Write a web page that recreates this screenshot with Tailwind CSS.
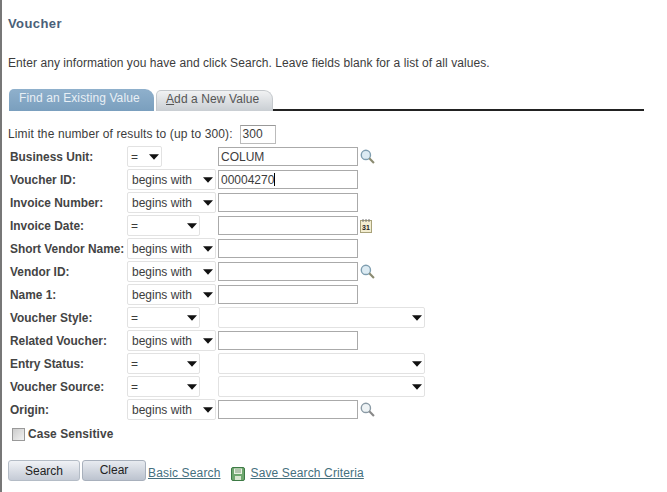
<!DOCTYPE html>
<html><head><meta charset="utf-8"><script src="https://cdn.jsdelivr.net/npm/@tailwindcss/browser@4"></script></head>
<body class="bg-white">
<div class="w-[667px] h-[492px] overflow-hidden bg-white font-['Liberation_Sans',Arial,sans-serif] text-[12px] text-[#3c3c3c] border-l-2 border-[#777] pl-[6px] flex flex-col items-start">
  <h1 class="mt-[16px] h-[16px] leading-[16px] text-[13px] font-bold tracking-[0.4px] text-[#4a6078]">Voucher</h1>
  <p class="mt-[23px] h-[16px] leading-[16px] text-[12px] tracking-[0.065px]">Enter any information you have and click Search. Leave fields blank for a list of all values.</p>
  <div class="mt-[17px] flex items-end w-[636px] h-[23px] relative">
    <div class="w-[145px] h-[22px] ml-[1px] rounded-tl-[5px] rounded-tr-[9px] bg-gradient-to-b from-[#8fb0cc] to-[#7a9fbe] text-[#e8eff5] leading-[19px] pl-[10px] tracking-[0.1px]">Find an Existing Value</div>
    <div class="w-[117px] h-[21px] ml-[2px] rounded-tl-[5px] rounded-tr-[9px] border border-b-0 border-[#c4c8cc] bg-gradient-to-b from-[#f1f2f3] to-[#c9ced3] text-[#555] leading-[17px] pl-[9px] tracking-[0.1px]"><span class="underline">A</span>dd a New Value</div>
    <div class="flex-1 h-[2px] bg-[#222]"></div>
  </div>
  <div class="mt-[13px] flex items-center h-[20px]">
    <span class="tracking-[0.12px]">Limit the number of results to (up to 300):</span>
    <div class="ml-[7px] w-[36px] h-[19px] border border-[#bbb] border-t-[#999] leading-[16px] pl-[2px]">300</div>
  </div>
  <div class="mt-[1px] grid grid-cols-[119px_91px_auto] auto-rows-[23px] items-center w-[430px]">
    <label class="pl-[2px] pt-[2px] font-bold text-[11.9px] text-[#444]">Business Unit:</label>
    <div class="w-[35px] h-[21px] border border-[#e2e2e2] rounded-[2px] flex items-center justify-between pl-[3px] pr-[2px]"><span>=</span><svg width="10" height="6" viewBox="0 0 11 6"><path d="M0 0h11L5.500 6z" fill="#111"/></svg></div>
    <div class="flex items-center gap-[2px]"><div class="w-[140px] h-[19px] border border-[#aaa] leading-[18px] pl-[2px]">COLUM</div><svg width="15" height="15" viewBox="0 0 14 14"><circle cx="5.500" cy="5.500" r="4.300" fill="#dcebf3" stroke="#7f9eb0" stroke-width="1.300"/><path d="M8.700 8.700 13 13" stroke="#8a8a70" stroke-width="2"/></svg></div>

    <label class="pl-[2px] pt-[2px] font-bold text-[11.9px] text-[#444]">Voucher ID:</label>
    <div class="w-[89px] h-[21px] border border-[#e2e2e2] rounded-[2px] flex items-center justify-between pl-[4px] pr-[2px]"><span>begins with</span><svg width="10" height="6" viewBox="0 0 11 6"><path d="M0 0h11L5.500 6z" fill="#111"/></svg></div>
    <div class="flex items-center"><div class="w-[140px] h-[19px] border border-[#aaa] leading-[18px] pl-[2px]">00004270<span class="inline-block w-[1px] h-[13px] bg-black align-[-2px]"></span></div></div>

    <label class="pl-[2px] pt-[2px] font-bold text-[11.9px] text-[#444]">Invoice Number:</label>
    <div class="w-[89px] h-[21px] border border-[#e2e2e2] rounded-[2px] flex items-center justify-between pl-[4px] pr-[2px]"><span>begins with</span><svg width="10" height="6" viewBox="0 0 11 6"><path d="M0 0h11L5.500 6z" fill="#111"/></svg></div>
    <div class="flex items-center"><div class="w-[140px] h-[19px] border border-[#aaa]"></div></div>

    <label class="pl-[2px] pt-[2px] font-bold text-[11.9px] text-[#444]">Invoice Date:</label>
    <div class="w-[73px] h-[21px] border border-[#e2e2e2] rounded-[2px] flex items-center justify-between pl-[3px] pr-[2px]"><span>=</span><svg width="10" height="6" viewBox="0 0 11 6"><path d="M0 0h11L5.500 6z" fill="#111"/></svg></div>
    <div class="flex items-center gap-[2px]"><div class="w-[140px] h-[19px] border border-[#aaa]"></div><svg width="12" height="14" viewBox="0 0 12 14"><rect x="0.500" y="1.500" width="11" height="12" fill="#f3edd0" stroke="#a8a27a"/><path d="M3 0v3M6 0v3M9 0v3" stroke="#777"/><text x="6" y="11" font-size="7" font-weight="bold" text-anchor="middle" fill="#222" font-family="Liberation Sans">31</text></svg></div>

    <label class="pl-[2px] pt-[2px] font-bold text-[11.9px] text-[#444] whitespace-nowrap">Short Vendor Name:</label>
    <div class="w-[89px] h-[21px] border border-[#e2e2e2] rounded-[2px] flex items-center justify-between pl-[4px] pr-[2px]"><span>begins with</span><svg width="10" height="6" viewBox="0 0 11 6"><path d="M0 0h11L5.500 6z" fill="#111"/></svg></div>
    <div class="flex items-center"><div class="w-[140px] h-[19px] border border-[#aaa]"></div></div>

    <label class="pl-[2px] pt-[2px] font-bold text-[11.9px] text-[#444]">Vendor ID:</label>
    <div class="w-[89px] h-[21px] border border-[#e2e2e2] rounded-[2px] flex items-center justify-between pl-[4px] pr-[2px]"><span>begins with</span><svg width="10" height="6" viewBox="0 0 11 6"><path d="M0 0h11L5.500 6z" fill="#111"/></svg></div>
    <div class="flex items-center gap-[2px]"><div class="w-[140px] h-[19px] border border-[#aaa]"></div><svg width="15" height="15" viewBox="0 0 14 14"><circle cx="5.500" cy="5.500" r="4.300" fill="#dcebf3" stroke="#7f9eb0" stroke-width="1.300"/><path d="M8.700 8.700 13 13" stroke="#8a8a70" stroke-width="2"/></svg></div>

    <label class="pl-[2px] pt-[2px] font-bold text-[11.9px] text-[#444]">Name 1:</label>
    <div class="w-[89px] h-[21px] border border-[#e2e2e2] rounded-[2px] flex items-center justify-between pl-[4px] pr-[2px]"><span>begins with</span><svg width="10" height="6" viewBox="0 0 11 6"><path d="M0 0h11L5.500 6z" fill="#111"/></svg></div>
    <div class="flex items-center"><div class="w-[140px] h-[19px] border border-[#aaa]"></div></div>

    <label class="pl-[2px] pt-[2px] font-bold text-[11.9px] text-[#444]">Voucher Style:</label>
    <div class="w-[73px] h-[21px] border border-[#e2e2e2] rounded-[2px] flex items-center justify-between pl-[3px] pr-[2px]"><span>=</span><svg width="10" height="6" viewBox="0 0 11 6"><path d="M0 0h11L5.500 6z" fill="#111"/></svg></div>
    <div class="w-[207px] h-[21px] border border-[#e2e2e2] rounded-[2px] flex items-center justify-end pr-[2px]"><svg width="10" height="6" viewBox="0 0 11 6"><path d="M0 0h11L5.500 6z" fill="#111"/></svg></div>

    <label class="pl-[2px] pt-[2px] font-bold text-[11.9px] text-[#444]">Related Voucher:</label>
    <div class="w-[89px] h-[21px] border border-[#e2e2e2] rounded-[2px] flex items-center justify-between pl-[4px] pr-[2px]"><span>begins with</span><svg width="10" height="6" viewBox="0 0 11 6"><path d="M0 0h11L5.500 6z" fill="#111"/></svg></div>
    <div class="flex items-center"><div class="w-[140px] h-[19px] border border-[#aaa]"></div></div>

    <label class="pl-[2px] pt-[2px] font-bold text-[11.9px] text-[#444]">Entry Status:</label>
    <div class="w-[73px] h-[21px] border border-[#e2e2e2] rounded-[2px] flex items-center justify-between pl-[3px] pr-[2px]"><span>=</span><svg width="10" height="6" viewBox="0 0 11 6"><path d="M0 0h11L5.500 6z" fill="#111"/></svg></div>
    <div class="w-[207px] h-[21px] border border-[#e2e2e2] rounded-[2px] flex items-center justify-end pr-[2px]"><svg width="10" height="6" viewBox="0 0 11 6"><path d="M0 0h11L5.500 6z" fill="#111"/></svg></div>

    <label class="pl-[2px] pt-[2px] font-bold text-[11.9px] text-[#444]">Voucher Source:</label>
    <div class="w-[73px] h-[21px] border border-[#e2e2e2] rounded-[2px] flex items-center justify-between pl-[3px] pr-[2px]"><span>=</span><svg width="10" height="6" viewBox="0 0 11 6"><path d="M0 0h11L5.500 6z" fill="#111"/></svg></div>
    <div class="w-[207px] h-[21px] border border-[#e2e2e2] rounded-[2px] flex items-center justify-end pr-[2px]"><svg width="10" height="6" viewBox="0 0 11 6"><path d="M0 0h11L5.500 6z" fill="#111"/></svg></div>

    <label class="pl-[2px] pt-[2px] font-bold text-[11.9px] text-[#444]">Origin:</label>
    <div class="w-[89px] h-[21px] border border-[#e2e2e2] rounded-[2px] flex items-center justify-between pl-[4px] pr-[2px]"><span>begins with</span><svg width="10" height="6" viewBox="0 0 11 6"><path d="M0 0h11L5.500 6z" fill="#111"/></svg></div>
    <div class="flex items-center gap-[2px]"><div class="w-[140px] h-[19px] border border-[#aaa]"></div><svg width="15" height="15" viewBox="0 0 14 14"><circle cx="5.500" cy="5.500" r="4.300" fill="#eef3f5" stroke="#8a9aa5" stroke-width="1.300"/><path d="M8.700 8.700 13 13" stroke="#888" stroke-width="2"/></svg></div>
  </div>
  <div class="mt-[3px] flex items-center h-[20px] pl-[4px]">
    <div class="w-[13px] h-[13px] border border-[#999] bg-gradient-to-br from-[#ccc] to-[#f2f2f2]"></div>
    <span class="ml-[3px] pt-[2px] font-bold text-[11.9px] tracking-[0.1px] text-[#444]">Case Sensitive</span>
  </div>
  <div class="mt-[16px] flex items-end">
    <div class="w-[72px] h-[21px] border border-[#b4bcc6] rounded-[3px] bg-gradient-to-b from-[#f0f2f6] to-[#c5cbd6] text-center leading-[20px] text-[#222]">Search</div>
    <div class="ml-[2px] w-[64px] h-[21px] border border-[#a8b0bc] rounded-[3px] bg-gradient-to-b from-[#e8ebf0] to-[#bcc3cf] text-center leading-[18px] text-[#222]">Clear</div>
    <a class="ml-[2px] underline text-[#45707e] leading-[15px] tracking-[0.15px]">Basic Search</a>
    <svg class="ml-[10px]" width="14" height="14" viewBox="0 0 14 14"><rect x="0.500" y="0.500" width="13" height="13" rx="1.500" fill="#6fa76f" stroke="#3d7a45"/><rect x="3" y="1.500" width="8" height="5.500" fill="#e8f0e0"/><path d="M4 3h6M4 5h6" stroke="#7a9a7a"/><rect x="4" y="9" width="6" height="4" fill="#d8e6d0"/></svg>
    <a class="ml-[6px] underline text-[#45707e] leading-[15px] tracking-[0.13px]">Save Search Criteria</a>
  </div>
</div>
</body></html>
